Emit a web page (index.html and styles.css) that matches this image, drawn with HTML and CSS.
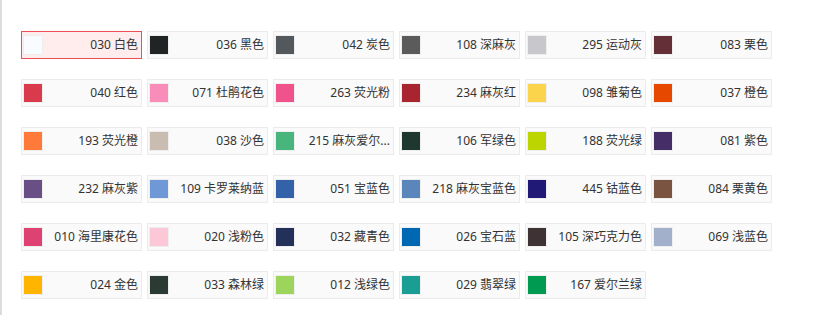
FILE: index.html
```html
<!DOCTYPE html>
<html lang="zh-CN">
<head>
<meta charset="utf-8">
<title>颜色</title>
<link rel="stylesheet" href="styles.css">
</head>
<body>
<div class="page">
  <ul class="colors">
    <li class="item selected"><span class="sw" style="background:#f8fbff"></span><span class="name">030 白色</span></li>
    <li class="item"><span class="sw" style="background:#212424"></span><span class="name">036 黑色</span></li>
    <li class="item"><span class="sw" style="background:#53585c"></span><span class="name">042 炭色</span></li>
    <li class="item"><span class="sw" style="background:#5b5b5b"></span><span class="name">108 深麻灰</span></li>
    <li class="item"><span class="sw" style="background:#c8c8cc"></span><span class="name">295 运动灰</span></li>
    <li class="item"><span class="sw" style="background:#652f38"></span><span class="name">083 栗色</span></li>

    <li class="item"><span class="sw" style="background:#d93a4c"></span><span class="name">040 红色</span></li>
    <li class="item"><span class="sw" style="background:#f98cb8"></span><span class="name">071 杜鹃花色</span></li>
    <li class="item"><span class="sw" style="background:#f0528c"></span><span class="name">263 荧光粉</span></li>
    <li class="item"><span class="sw" style="background:#a8242e"></span><span class="name">234 麻灰红</span></li>
    <li class="item"><span class="sw" style="background:#fcd44c"></span><span class="name">098 雏菊色</span></li>
    <li class="item"><span class="sw" style="background:#e64800"></span><span class="name">037 橙色</span></li>

    <li class="item"><span class="sw" style="background:#ff7a38"></span><span class="name">193 荧光橙</span></li>
    <li class="item"><span class="sw" style="background:#c8bdb0"></span><span class="name">038 沙色</span></li>
    <li class="item"><span class="sw" style="background:#48b57c"></span><span class="name" title="215 麻灰爱尔兰绿">215 麻灰爱尔...</span></li>
    <li class="item"><span class="sw" style="background:#1e3830"></span><span class="name">106 军绿色</span></li>
    <li class="item"><span class="sw" style="background:#bcd400"></span><span class="name">188 荧光绿</span></li>
    <li class="item"><span class="sw" style="background:#452e68"></span><span class="name">081 紫色</span></li>

    <li class="item"><span class="sw" style="background:#6a4e86"></span><span class="name">232 麻灰紫</span></li>
    <li class="item"><span class="sw" style="background:#6f98d6"></span><span class="name">109 卡罗莱纳蓝</span></li>
    <li class="item"><span class="sw" style="background:#3362a8"></span><span class="name">051 宝蓝色</span></li>
    <li class="item"><span class="sw" style="background:#5b86bc"></span><span class="name">218 麻灰宝蓝色</span></li>
    <li class="item"><span class="sw" style="background:#201a76"></span><span class="name">445 钴蓝色</span></li>
    <li class="item"><span class="sw" style="background:#7a5440"></span><span class="name">084 栗黄色</span></li>

    <li class="item"><span class="sw" style="background:#dd4272"></span><span class="name">010 海里康花色</span></li>
    <li class="item"><span class="sw" style="background:#fcc8d8"></span><span class="name">020 浅粉色</span></li>
    <li class="item"><span class="sw" style="background:#22305a"></span><span class="name">032 藏青色</span></li>
    <li class="item"><span class="sw" style="background:#0068b2"></span><span class="name">026 宝石蓝</span></li>
    <li class="item"><span class="sw" style="background:#3e3234"></span><span class="name">105 深巧克力色</span></li>
    <li class="item"><span class="sw" style="background:#a3b0cc"></span><span class="name">069 浅蓝色</span></li>

    <li class="item"><span class="sw" style="background:#ffb400"></span><span class="name">024 金色</span></li>
    <li class="item"><span class="sw" style="background:#2c3a34"></span><span class="name">033 森林绿</span></li>
    <li class="item"><span class="sw" style="background:#9cd45c"></span><span class="name">012 浅绿色</span></li>
    <li class="item"><span class="sw" style="background:#1a9e94"></span><span class="name">029 翡翠绿</span></li>
    <li class="item"><span class="sw" style="background:#009a50"></span><span class="name">167 爱尔兰绿</span></li>
  </ul>
</div>
</body>
</html>
```

FILE: styles.css
```css
html, body {
  margin: 0;
  padding: 0;
  background: #fff;
}
body {
  font-family: "Noto Sans", "Noto Sans CJK SC", sans-serif;
  font-size: 12px;
  color: #333;
}
.page {
  border-left: 2px solid #dcdcdc;
  min-height: 315px;
  box-sizing: border-box;
  padding: 31px 0 0 19px;
}
.colors {
  list-style: none;
  margin: 0;
  padding: 0;
  display: grid;
  grid-template-columns: repeat(6, 121px);
  grid-auto-rows: 28px;
  column-gap: 5px;
  row-gap: 20px;
}
.item {
  box-sizing: border-box;
  border: 1px solid #ebebeb;
  background: #fafafa;
  display: flex;
  align-items: center;
  padding: 0 3px 0 1px;
  gap: 5px;
  cursor: pointer;
}
.item.selected {
  border-color: #ee4f55;
  background: #ffeced;
}
.sw {
  flex: none;
  box-sizing: border-box;
  width: 20px;
  height: 20px;
  border: 1px solid #eeeeee;
  background-clip: padding-box;
}
.name {
  flex: 1;
  min-width: 0;
  text-align: right;
  white-space: nowrap;
  overflow: hidden;
  line-height: 26px;
}
```
